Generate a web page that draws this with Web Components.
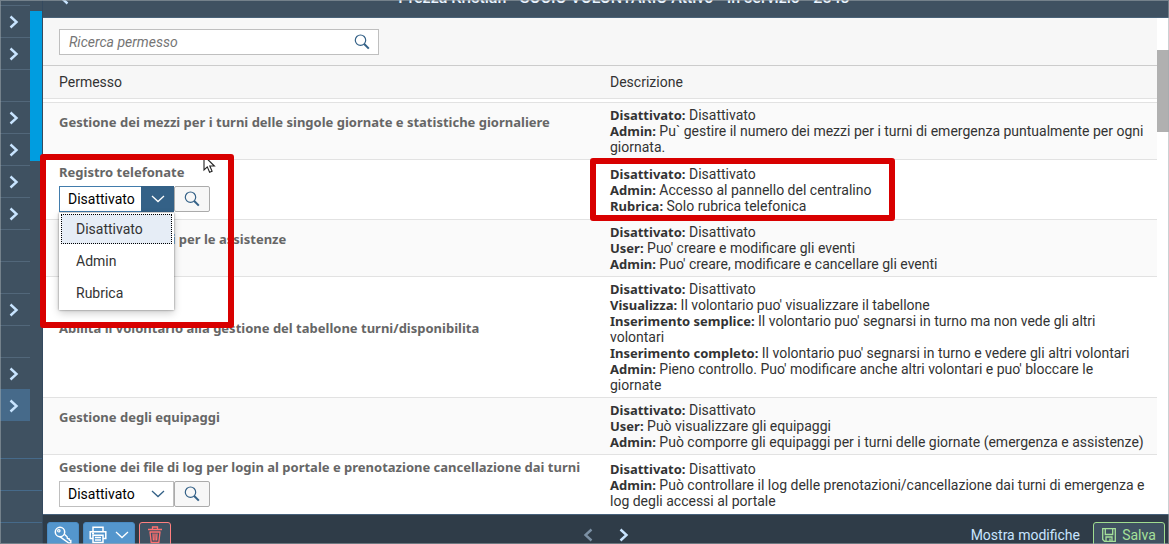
<!DOCTYPE html>
<html lang="it">
<head>
<meta charset="utf-8">
<title>Permessi</title>
<style>
  html, body { margin: 0; height: 100%; overflow: hidden; }
  body { font: 14px/16px Roboto, "Noto Sans", sans-serif; color: #333; }
</style>
</head>
<body>
<app-shell>
  <side-nav slot="nav"></side-nav>
  <page-header slot="header">Prezza Kristian - SOCIO VOLONTARIO Attivo - In servizio - 2843</page-header>
  <search-field slot="content" label="Ricerca permesso"></search-field>
  <permission-table slot="content"></permission-table>
  <scroll-bar slot="scroll"></scroll-bar>
  <action-bar slot="footer"></action-bar>
</app-shell>

<script>
const svg = (w, h, box, body) => `<svg width="${w}" height="${h}" viewBox="${box}" fill="none" stroke="currentColor" aria-hidden="true">${body}</svg>`;
const ICON = {
  next: svg(10, 14, '0 0 10 14', '<path d="M1.5 1.5 7.5 7l-6 5.5" stroke-width="2.4"/>'),
  prev: svg(10, 14, '0 0 10 14', '<path d="M8.5 1.5 2.5 7l6 5.5" stroke-width="2.4"/>'),
  down: svg(14, 8, '0 0 14 8', '<path d="M1 1l6 5.5L13 1" stroke-width="1.3"/>'),
  lens: svg(16, 16, '0 0 16 16', '<circle cx="6.5" cy="6.2" r="5.2" stroke-width="1.2"/><path d="M10.2 10l4.6 4.6" stroke-width="2"/>'),
  key: svg(18, 18, '0 0 18 18', '<circle cx="6" cy="6" r="4.7" stroke-width="1.5"/><circle cx="4.8" cy="4.8" r="1.2" stroke-width="1.2"/><path d="M5.8 10.6l9 6.4h2v-2.6l-1.4-.3-.4-1.4-1.6-.3-.3-1.6-2.7-2.6" stroke-width="1.4"/>'),
  print: svg(18, 18, '0 0 18 18', '<path d="M4 5V1.2h10V5M4 12.5H1.2V5.7h15.6v6.8H14M4 9.2h10v7.4H4zM6 11.5h6M6 14h6M3 7.5h2" stroke-width="1.5"/>'),
  bin: svg(16, 18, '0 0 16 18', '<path d="M1 3.5h14M5.5 3V1h5v2M2.5 6h11M3 6l1.2 10.5h7.6L13 6M6 7.5l.4 7M8 7.5v7M10 7.5l-.4 7" stroke-width="1.3"/>'),
  save: svg(14, 14, '0 0 14 14', '<path d="M.7.7h12.6v12.6H2.5L.7 11.5zM3.3 1v5.5h7.4V1M4 13V9h6v4M8 10.5V13" stroke-width="1.3"/>')
};
function define(name, html) {
  customElements.define(name, class extends HTMLElement {
    connectedCallback() {
      if (this.shadowRoot) return;
      this.attachShadow({ mode: 'open' }).innerHTML = typeof html === 'function' ? html(this) : html;
    }
  });
}

define('red-frame', `<style>
  :host { position: absolute; z-index: 5; box-sizing: border-box; border: 6px solid #d80000; border-radius: 3px; pointer-events: none; }
</style>`);

define('app-shell', `<style>
  :host { display: grid; grid-template-columns: 43px 1fr; grid-template-rows: minmax(0, 1fr); height: 100vh; position: relative; overflow: hidden; background: #fff; }
  main { display: grid; grid-template-rows: auto minmax(0, 1fr) 30px; min-width: 0; min-height: 0; }
  .body { display: grid; grid-template-columns: 1fr 12px; min-height: 0; overflow: hidden; }
  .edge { position: absolute; inset: 0; border: 1px solid rgba(160,170,175,.55); z-index: 7; pointer-events: none; }
  .focus { left: 40px; top: 154px; width: 194px; height: 174px; }
  .pointer { position: absolute; left: 203px; top: 155px; z-index: 4; }
</style>
<slot name="nav"></slot>
<main>
  <slot name="header"></slot>
  <div class="body"><div><slot name="content"></slot></div><slot name="scroll"></slot></div>
  <slot name="footer"></slot>
</main>
<svg class="pointer" width="13" height="19" viewBox="0 0 13 19" aria-hidden="true"><path d="M1 .8V15l3.3-3.1 2.3 5.4 2.5-1.1-2.3-5.2h4.6z" fill="#fff" stroke="#222" stroke-width="1.1"/></svg>
<red-frame class="focus"></red-frame>
<div class="edge"></div>`);

const navRows = [1, 1, 0, 1, 1, 1, 1, 0, 0, 1, 0, 1, 2];
define('side-nav', `<style>
  :host { display: grid; grid-template-columns: 30px 12px; grid-template-rows: 458px minmax(0, 1fr); overflow: hidden; background: #3f5161; border-right: 1px solid #354a5f; }
  ul { margin: 0; padding: 5px 0 0; list-style: none; }
  li { box-sizing: border-box; height: 32px; border-top: 1px solid #52677a; color: #c8e4ff; }
  button { all: unset; box-sizing: border-box; display: flex; width: 100%; height: 100%; padding-left: 9px; align-items: center; }
  .on { background: #466a8a; border-color: #466a8a; }
  .thumb { height: 150px; margin-top: 11px; background: #009de0; }
  .tools { grid-column: 1 / 3; }
  .tools ul { padding: 0; }
  .tools li { border-color: #466a8a; }
</style>
<nav aria-label="Menu"><ul>${navRows.map(n => `<li class="${n === 2 ? 'on' : ''}">${n ? `<button aria-label="Espandi">${ICON.next}</button>` : ''}</li>`).join('')}</ul></nav>
<div><div class="thumb"></div></div>
<div class="tools"><ul><li></li><li></li><li></li></ul></div>`);

define('page-header', `<style>
  :host { display: grid; grid-template-columns: 36px 1fr; align-items: center; box-sizing: border-box; height: 40px; margin-top: -22px; background: #3f5161; border-bottom: 1px solid #496278; color: #eaf4ff; }
  h1 { margin: 0; font-size: 16px; font-weight: 500; line-height: 20px; text-align: center; }
  button { all: unset; display: flex; padding-left: 16px; color: #c8e4ff; }
</style><button aria-label="Indietro">${ICON.prev}</button><h1><slot></slot></h1>`);

define('search-field', el => `<style>
  :host { display: flex; box-sizing: border-box; height: 48px; padding: 11px 16px 0; background: #f7f7f7; border-bottom: 1px solid #ccc; }
  form { display: flex; box-sizing: border-box; width: 320px; height: 26px; background: #fff; border: 1px solid #bfbfbf; }
  input { flex: 1; min-width: 0; border: 0; outline: 0; padding: 0 9px; background: none; font: inherit; color: #333; }
  input::placeholder { font-style: italic; color: #757575; opacity: 1; }
  button { all: unset; display: grid; place-items: center; width: 32px; color: #346187; }
</style><form role="search"><input type="text" aria-label="${el.getAttribute('label')}" placeholder="${el.getAttribute('label')}"><button aria-label="Cerca">${ICON.lens}</button></form>`);

define('permission-combo', el => {
  const open = el.hasAttribute('open');
  return `<style>
  :host { display: flex; position: relative; height: 26px; margin-top: 6px; font: 400 14px/16px Roboto, sans-serif; }
  .box { display: grid; grid-template-columns: 82px 33px; width: 115px; }
  select { grid-area: 1 / 1 / 2 / 3; box-sizing: border-box; appearance: none; margin: 0; padding: 0 32px 0 8px; border: 1px solid #bfbfbf; border-radius: 0; background: #fff; color: #000; font: inherit; outline: 0; }
  .arrow { grid-area: 1 / 2; display: grid; place-items: center; color: #346187; pointer-events: none; }
  :host([open]) select { border-color: #427cac; }
  :host([open]) .arrow { background: #346187; color: #fff; }
  .find { box-sizing: border-box; display: grid; place-items: center; width: 36px; padding: 0; background: #f7f7f7; border: 1px solid #ababab; border-radius: 2px; color: #346187; }
  ul { position: absolute; z-index: 3; left: 0; top: 27px; box-sizing: border-box; width: 115px; margin: 0; padding: 1px 2px; list-style: none; background: #fff; box-shadow: 0 0 2px rgba(0,0,0,.5), 0 3px 8px rgba(0,0,0,.2); }
  li { box-sizing: border-box; height: 32px; padding: 8px 15px; color: #333; }
  li[aria-selected=true] { height: 30px; margin-bottom: 1px; padding: 6px 14px; background: #e6edf6; border: 1px dotted #000; }
</style>
<div class="box"><select aria-label="Livello"><option>Disattivato</option><option>Admin</option><option>Rubrica</option></select><span class="arrow">${ICON.down}</span></div>
<button class="find" aria-label="Dettagli">${ICON.lens}</button>
${open ? '<ul role="listbox" aria-label="Livelli"><li role="option" aria-selected="true">Disattivato</li><li role="option">Admin</li><li role="option">Rubrica</li></ul>' : ''}`;
});

const rows = [
  { name: 'Gestione dei mezzi per i turni delle singole giornate e statistiche giornaliere',
    roles: [['Disattivato', 'Disattivato'], ['Admin', 'Pu` gestire il numero dei mezzi per i turni di emergenza puntualmente per ogni giornata.']] },
  { name: 'Registro telefonate', combo: 'open', marked: true,
    roles: [['Disattivato', 'Disattivato'], ['Admin', 'Accesso al pannello del centralino'], ['Rubrica', 'Solo rubrica telefonica']] },
  { name: 'Gestione dei turni per le assistenze',
    roles: [['Disattivato', 'Disattivato'], ['User', "Puo' creare e modificare gli eventi"], ['Admin', "Puo' creare, modificare e cancellare gli eventi"]] },
  { name: 'Abilita il volontario alla gestione del tabellone turni/disponibilita',
    roles: [['Disattivato', 'Disattivato'], ['Visualizza', "Il volontario puo' visualizzare il tabellone"], ['Inserimento semplice', "Il volontario puo' segnarsi in turno ma non vede gli altri volontari"], ['Inserimento completo', "Il volontario puo' segnarsi in turno e vedere gli altri volontari"], ['Admin', "Pieno controllo. Puo' modificare anche altri volontari e puo' bloccare le giornate"]] },
  { name: 'Gestione degli equipaggi',
    roles: [['Disattivato', 'Disattivato'], ['User', 'Può visualizzare gli equipaggi'], ['Admin', 'Può comporre gli equipaggi per i turni delle giornate (emergenza e assistenze)']] },
  { name: 'Gestione dei file di log per login al portale e prenotazione cancellazione dai turni', combo: 'closed',
    roles: [['Disattivato', 'Disattivato'], ['Admin', 'Può controllare il log delle prenotazioni/cancellazione dai turni di emergenza e log degli accessi al portale']] }
];
define('permission-table', `<style>
  :host { display: block; }
  table { width: 100%; table-layout: fixed; border-collapse: separate; border-spacing: 0; }
  th, td { text-align: left; border-bottom: 1px solid #e2e2e2; }
  th:first-child { padding-left: 16px; padding-right: 0; }
  thead th { height: 32px; padding: 0 8px 0 10px; background: #f7f7f7; font-weight: 400; }
  .gap td { height: 3px; padding: 0; background: #fff; }
  tbody th { padding: 4px 0; color: #666; font: 700 13px/16px "Noto Sans", sans-serif; white-space: nowrap; }
  b { font: 700 13px/1 "Noto Sans", sans-serif; }
  tbody th.plain { padding-bottom: 22px; }
  tbody th.edit { padding-bottom: 7px; }
  td { padding: 4px 10px; }
  tr.alt > * { background: #fafafa; }
  p { margin: 0; }
  .info { position: relative; }
  red-frame { left: -20px; top: -8px; width: 305px; height: 63px; }
</style>
<table><thead><tr><th scope="col">Permesso</th><th scope="col">Descrizione</th></tr></thead>
<tbody><tr class="gap"><td colspan="2"></td></tr>
${rows.map((r, i) => `<tr class="${i % 2 ? '' : 'alt'}"><th scope="row" class="${r.combo ? 'edit' : 'plain'}">${r.name}${r.combo ? `<permission-combo ${r.combo}></permission-combo>` : ''}</th><td><div class="info">${r.roles.map(([a, b]) => `<p><b>${a}:</b> ${b}</p>`).join('')}${r.marked ? '<red-frame></red-frame>' : ''}</div></td></tr>`).join('')}
</tbody></table>`);

define('scroll-bar', `<style>
  :host { display: block; background: #fff; padding-top: 32px; }
  div { height: 82px; background: #b0b0b0; }
</style><div></div>`);

define('action-bar', `<style>
  :host { display: grid; grid-template-columns: 1fr auto 1fr; align-items: start; box-sizing: border-box; padding: 7px 4px 0; overflow: hidden; background: #2f3c48; border-top: 1px solid #46607a; position: relative; z-index: 2; }
  div { display: flex; gap: 4px; }
  .right { justify-content: flex-end; }
  button { box-sizing: border-box; display: flex; align-items: center; justify-content: center; height: 26px; padding: 0; border: 1px solid transparent; border-radius: 3px; background: none; font: inherit; color: #c8e4ff; }
  .sq { width: 32px; }
  .blue { background: #5496cd; border-color: #4a8bc3; color: #fff; }
  .wide { width: 52px; gap: 8px; }
  .red { border-color: #ff8080; background: #3f5161; color: #ff7070; }
  .off { opacity: .5; }
  .text { padding: 0 8px; }
  .save { width: 72px; gap: 6px; border-color: #a0dc90; background: #3f5161; color: #a5e09a; }
</style>
<div><button class="sq blue" aria-label="Password">${ICON.key}</button><button class="wide blue" aria-label="Stampa">${ICON.print}${ICON.down}</button><button class="sq red" aria-label="Elimina">${ICON.bin}</button></div>
<div><button class="sq off" aria-label="Precedente">${ICON.prev}</button><button class="sq" aria-label="Successivo">${ICON.next}</button></div>
<div class="right"><button class="text">Mostra modifiche</button><button class="save">${ICON.save}Salva</button></div>`);
</script>
</body>
</html>
